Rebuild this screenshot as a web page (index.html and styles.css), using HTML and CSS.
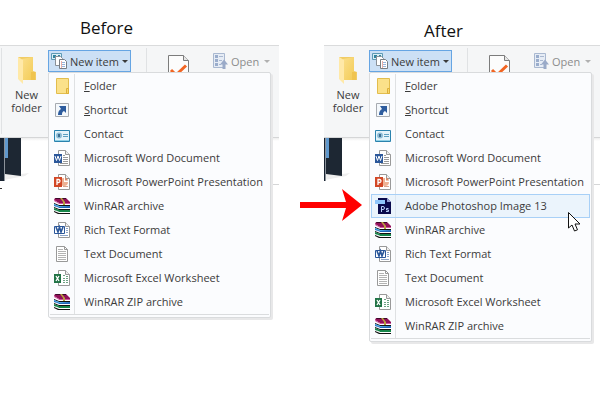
FILE: index.html
```
<!DOCTYPE html>
<html lang="en">
<head>
<meta charset="UTF-8">
<meta name="viewport" content="width=device-width, initial-scale=1.0">
<title>New item menu</title>
<link rel="stylesheet" href="styles.css">
</head>
<body>

<!-- Icons shared by both menus -->
<svg class="sprite" aria-hidden="true">
    <defs>
        <linearGradient id="gold" x1="0" y1="0" x2="1" y2="1">
            <stop offset="0" stop-color="#fbdf8b"/>
            <stop offset="1" stop-color="#f3cc58"/>
        </linearGradient>
    </defs>
    <symbol id="big-folder" viewBox="0 0 18 27">
        <path d="M0 0H15V14L18 15V23H5Z" fill="#f1cc65"/>
        <path d="M4 2L15 0V23H5Z" fill="url(#gold)"/>
        <path d="M0 0L5 3V27L0 22Z" fill="#ffe9a8"/>
        <path d="M13 15h4v8h-4z" fill="#f0c44f"/>
    </symbol>
    <symbol id="new-item" viewBox="0 0 16 16">
        <path d="M.5 .5h10v6h-10z" fill="#d9eef5" stroke="#5d9ab5"/>
        <path d="M2 2h3v3H2zM7 2h2v2H7z" fill="#32849f"/>
        <path d="M4.500 3.500h5l2 2v7h-7z" fill="#fff" stroke="#8a9097"/>
        <path d="M8.500 6.500h5l2 2v7h-7z" fill="#fff" stroke="#777d84"/>
        <path d="M10 9.500h4M10 11.500h4M10 13.500h4" stroke="#95b4dc"/>
        <path d="M10.500 8v7" stroke="#eab0a8"/>
    </symbol>
    <symbol id="check-doc" viewBox="0 0 21 27">
        <path d="M.5 .5h15l5 5v21H.5z" fill="#fcfcfc" stroke="#7c7c7c"/>
        <path d="M15.500 .5v5h5" fill="#e6e6e6" stroke="#7c7c7c"/>
        <path d="M3 15l5 5L18 10.500" fill="none" stroke="#f26522" stroke-width="3"/>
    </symbol>
    <symbol id="open" viewBox="0 0 15 16">
        <path d="M.5 .5h11v14H.5z" fill="#e6ecf5" stroke="#a9b8d0"/>
        <path d="M2 2h3v3H2zM2 6h3v3H2zM2 10h3v3H2z" fill="#9aadcc"/>
        <path d="M6 3.500h4M6 7.500h3M6 11.500h2" stroke="#a9b8d0"/>
        <path d="M11 6.500l4 5h-2.500V16h-3v-4.500H7z" fill="#9aaac8"/>
    </symbol>
    <symbol id="folder" viewBox="0 0 16 16">
        <path d="M2.500 .5h12v15h-12z" fill="#fbe18a" stroke="#e2bd4e"/>
        <path d="M12.500 10.500h2v5h-2z" fill="#f9d86c" stroke="#dcb03a"/>
    </symbol>
    <symbol id="shortcut" viewBox="0 0 16 16">
        <path d="M1.500 1.500h13v13h-13z" fill="#f4f8fc" stroke="#a7abb1"/>
        <path d="M5 4h7v7l-2-2c-2 1-2 2-2 4H4c0-3 1-5 3-6z" fill="#2d5c9e"/>
    </symbol>
    <symbol id="contact" viewBox="0 0 16 16">
        <path d="M.5 4.500h15v11H.5z" fill="#e4f3fa" stroke="#2a82ad"/>
        <path d="M1 14.500h14" stroke="#8fd0e6"/>
        <circle cx="5" cy="9.500" r="3" fill="#8dbcd5"/>
        <path d="M4 8h2v3H4z" fill="#3e6f91"/>
        <path d="M9 8.500h5M9 10.500h5" stroke="#5b9fc0"/>
    </symbol>
    <symbol id="page" viewBox="0 0 16 16">
        <path d="M4.500 .5h7l4 4v11h-11z" fill="#fff" stroke="#999"/>
        <path d="M11.500 .5v4h4" fill="#eee" stroke="#999"/>
    </symbol>
    <symbol id="word" viewBox="0 0 16 16">
        <use href="#page"/>
        <path d="M9 5.500h2M9 7.500h5M9 9.500h5M9 11.500h5M6 13.500h8" stroke="#999"/>
        <path d="M0 4h8v9H0z" fill="#2b579a"/>
        <path d="M1 6l1.500 4.500L4 6l1.500 4.500L7 6" fill="none" stroke="#fff"/>
    </symbol>
    <symbol id="powerpoint" viewBox="0 0 16 16">
        <use href="#page"/>
        <path d="M10 4a4 4 0 1 0 4 4h-4z" fill="#eeb194"/>
        <path d="M11 3.500a4 4 0 0 1 3 3h-3z" fill="#d98b6a"/>
        <path d="M9 12.500h5" stroke="#d9a48e"/>
        <path d="M0 3h8v10H0z" fill="#d24726"/>
        <path d="M3 11V5.500h1.500a1.500 1.500 0 0 1 0 3H3" fill="none" stroke="#fff" stroke-width="1.300"/>
    </symbol>
    <symbol id="photoshop" viewBox="0 0 16 16">
        <path d="M3 0h9l4 4v12H3z" fill="#0a0a4c"/>
        <path d="M12 0l4 4h-4z" fill="#8f9bd0"/>
        <path d="M0 2h10v4H0z" fill="#8ec5fa"/>
        <path d="M6.500 14V8.500h1.500a1.500 1.500 0 0 1 0 3H6.500M13.500 10.500h-2v1.500h2v1.500h-2.500" fill="none" stroke="#b5cdf5"/>
    </symbol>
    <symbol id="winrar" viewBox="0 0 16 16">
        <path d="M1 0h11l4 4v1H5L0 2z" fill="#901058"/>
        <path d="M1 0h11v1H2z" fill="#3a0828"/>
        <path d="M0 2l5 3h11v1H5L0 3z" fill="#d0559c"/>
        <path d="M1 4l4 2h10v1H5z" fill="#fff"/>
        <path d="M0 5l5 2h11v1H5L0 6z" fill="#111"/>
        <path d="M0 6l5 2h11v2H5L0 8z" fill="#2167b8"/>
        <path d="M0 6l5 2h11L5 9 0 7z" fill="#56b4ec"/>
        <path d="M1 8l4 2h10v1H5z" fill="#fff"/>
        <path d="M0 9l5 2h11v1H5l-5-2z" fill="#111"/>
        <path d="M0 10l5 2h11v2H5l-5-2z" fill="#17864a"/>
        <path d="M1 12l4 2h10v1H5z" fill="#fff"/>
        <path d="M0 13l5 2h11v1H4l-4-2z" fill="#111"/>
        <path d="M6 0h2l3 4v3H9V4z" fill="#b8a040"/>
    </symbol>
    <symbol id="rtf" viewBox="0 0 16 16">
        <use href="#page"/>
        <path d="M12 6.500h2M12 8.500h2M12 10.500h2M6 13.500h8" stroke="#8ba3c7"/>
        <path d="M.5 4.500h10v7H.5z" fill="#fff" stroke="#2b579a"/>
        <path d="M2 5l2 5 1.500-5L7 10l2-5" fill="none" stroke="#2b579a" stroke-width="1.600"/>
    </symbol>
    <symbol id="text" viewBox="0 0 16 16">
        <path d="M2.500 .5h8l3 3v12h-11z" fill="#fff" stroke="#999"/>
        <path d="M10.500 .5v3h3" fill="none" stroke="#999"/>
        <path d="M4 3.500h5M4 5.500h8M4 7.500h8M4 9.500h8M4 11.500h8M4 13.500h8" stroke="#b3b3b3"/>
    </symbol>
    <symbol id="excel" viewBox="0 0 16 16">
        <use href="#page"/>
        <path d="M9 5.500h2M12 6.500h2M9 8.500h2M12 8.500h2M9 10.500h2M12 10.500h2M9 12.500h2M12 12.500h2" stroke="#6fa384"/>
        <path d="M0 4h7v9H0z" fill="#217346"/>
        <path d="M2 6l3 5M5 6l-3 5" stroke="#fff" stroke-width="1.300"/>
    </symbol>
    <symbol id="binders" viewBox="0 0 30 52">
        <path d="M5 36h16l8-1-4 3-16 3-5 1z" fill="#eee"/>
        <path d="M5 0h16v38L5 36z" fill="#1d2733"/>
        <path d="M0 0h4v43H0z" fill="#172230"/>
        <path d="M4 0h1v43H4z" fill="#8b929a"/>
        <path d="M5 0h3v20H5z" fill="#5f98cd"/>
        <path d="M0 50h2v1H0z" fill="#333"/>
    </symbol>
</svg>

<main class="compare">
    <section class="shot">
        <h2>Before</h2>
        <div class="ribbon">
            <span class="divider"></span>
            <button class="new-folder">
                <svg width="18" height="27"><use href="#big-folder"/></svg>
                New folder
            </button>
            <div class="dropdown">
                <button class="new-item" aria-expanded="true">
                    <svg width="16" height="16"><use href="#new-item"/></svg>
                    New item
                    <span class="caret"></span>
                </button>
                <div class="menu">
                    <ul>
                        <li><button><svg><use href="#folder"/></svg><span><u>F</u>older</span></button></li>
                        <li><button><svg><use href="#shortcut"/></svg><span><u>S</u>hortcut</span></button></li>
                        <li><button><svg><use href="#contact"/></svg><span>Contact</span></button></li>
                        <li><button><svg><use href="#word"/></svg><span>Microsoft Word Document</span></button></li>
                        <li><button><svg><use href="#powerpoint"/></svg><span>Microsoft PowerPoint Presentation</span></button></li>
                        <li><button><svg><use href="#winrar"/></svg><span>WinRAR archive</span></button></li>
                        <li><button><svg><use href="#rtf"/></svg><span>Rich Text Format</span></button></li>
                        <li><button><svg><use href="#text"/></svg><span>Text Document</span></button></li>
                        <li><button><svg><use href="#excel"/></svg><span>Microsoft Excel Worksheet</span></button></li>
                        <li><button><svg><use href="#winrar"/></svg><span>WinRAR ZIP archive</span></button></li>
                    </ul>
                </div>
            </div>
            <span class="divider group-end"></span>
            <svg class="properties" width="21" height="27"><use href="#check-doc"/></svg>
            <button class="open" disabled>
                <svg width="15" height="16"><use href="#open"/></svg>
                Open
                <span class="caret"></span>
            </button>
        </div>
        <div class="files">
            <svg width="30" height="52"><use href="#binders"/></svg>
            <div class="preview"></div>
        </div>
    </section>

    <section class="shot after">
        <h2>After</h2>
        <div class="ribbon">
            <button class="new-folder">
                <svg width="18" height="27"><use href="#big-folder"/></svg>
                New folder
            </button>
            <div class="dropdown">
                <button class="new-item" aria-expanded="true">
                    <svg width="16" height="16"><use href="#new-item"/></svg>
                    New item
                    <span class="caret"></span>
                </button>
                <div class="menu">
                    <ul>
                        <li><button><svg><use href="#folder"/></svg><span><u>F</u>older</span></button></li>
                        <li><button><svg><use href="#shortcut"/></svg><span><u>S</u>hortcut</span></button></li>
                        <li><button><svg><use href="#contact"/></svg><span>Contact</span></button></li>
                        <li><button><svg><use href="#word"/></svg><span>Microsoft Word Document</span></button></li>
                        <li><button><svg><use href="#powerpoint"/></svg><span>Microsoft PowerPoint Presentation</span></button></li>
                        <li class="active">
                            <button><svg><use href="#photoshop"/></svg><span>Adobe Photoshop Image 13</span></button>
                            <svg class="arrow" viewBox="0 0 62 32"><path d="M0 13h46L42 0l20 16-20 16 4-13H0z" fill="#f00"/></svg>
                            <svg class="cursor" viewBox="0 0 13 20"><path d="M.5 .5v15.500l3.500-3 2.500 6 3-1.200-2.500-5.800h5z" fill="#fff" stroke="#111"/></svg>
                        </li>
                        <li><button><svg><use href="#winrar"/></svg><span>WinRAR archive</span></button></li>
                        <li><button><svg><use href="#rtf"/></svg><span>Rich Text Format</span></button></li>
                        <li><button><svg><use href="#text"/></svg><span>Text Document</span></button></li>
                        <li><button><svg><use href="#excel"/></svg><span>Microsoft Excel Worksheet</span></button></li>
                        <li><button><svg><use href="#winrar"/></svg><span>WinRAR ZIP archive</span></button></li>
                    </ul>
                </div>
            </div>
            <span class="divider group-end"></span>
            <svg class="properties" width="21" height="27"><use href="#check-doc"/></svg>
            <button class="open" disabled>
                <svg width="15" height="16"><use href="#open"/></svg>
                Open
                <span class="caret"></span>
            </button>
        </div>
        <div class="files">
            <svg width="27" height="49" viewBox="3 0 27 49"><use href="#binders" width="30" height="52"/></svg>
            <div class="preview"></div>
        </div>
    </section>
</main>

</body>
</html>
```
FILE: styles.css
```
* {
    box-sizing: border-box;
}

body {
    min-height: 100vh;
    margin: 0;
    background-color: #fff;
    color: #3b3b3b;
    font-family: "Open Sans", "Noto Sans", sans-serif;
    font-size: 11px;
}

svg {
    display: block;
    flex: none;
}

.sprite {
    position: absolute;
    width: 0;
    height: 0;
}

button {
    margin: 0;
    padding: 0;
    border: none;
    background: none;
    color: inherit;
    font: inherit;
}

.compare {
    display: grid;
    grid-template-columns: 279fr 276fr;
    column-gap: 45px;
    align-items: start;
    min-height: 100vh;
}

.shot h2 {
    margin: 0;
    padding: 16px 0 5px 80px;
    color: #111;
    font-size: 17px;
    font-weight: normal;
    line-height: 24px;
}

.after h2 {
    padding: 19px 0 2px 100px;
}

.ribbon {
    display: flex;
    align-items: flex-start;
    height: 93px;
    padding-left: 1px;
    background-color: #f5f6f7;
    border-top: 1px solid #dadbdc;
    border-bottom: 1px solid #d5d6d7;
}

.after .ribbon {
    padding-left: 0;
}

.divider {
    flex: none;
    width: 1px;
    height: 86px;
    margin-top: 2px;
    background-color: #e0e2e4;
}

.new-folder {
    flex: none;
    width: 46px;
    padding: 11px 0 0 3px;
    line-height: 13px;
}

.new-folder svg {
    margin: 0 auto 4px;
}

.after .new-folder {
    width: 45px;
}

.dropdown {
    position: relative;
    flex: none;
    margin-top: 4px;
}

.new-item {
    display: flex;
    align-items: center;
    gap: 3px;
    width: 83px;
    height: 22px;
    padding-left: 2px;
    background-color: #cce0f5;
    border: 1px solid #66a5e3;
}

.caret {
    border: 3px solid transparent;
    border-top-color: currentColor;
    border-bottom: none;
}

.group-end {
    margin-left: 15px;
}

.properties {
    margin: 9px 24px 0 21px;
}

.open {
    display: flex;
    align-items: center;
    gap: 3px;
    margin-top: 7px;
    color: #8c8c8c;
}

.open .caret {
    margin-left: 2px;
    color: #b0b0b0;
}

.menu {
    position: absolute;
    z-index: 1;
    top: 100%;
    left: 0;
    width: 223px;
    padding: 1px;
    background-color: #fbfcfe;
    border: 1px solid #d9dbdd;
    border-radius: 2px;
    box-shadow: 2px 2px 0 #e8e8e9;
}

.menu ul {
    margin: 0 0 1px;
    padding: 0;
    list-style: none;
    border-bottom: 1px solid #dadcde;
    background: linear-gradient(#dfe1e3, #dfe1e3) 24px 0 / 1px 100% no-repeat;
}

.menu li {
    position: relative;
}

.menu li button {
    display: flex;
    align-items: center;
    gap: 14px;
    width: 100%;
    height: 24px;
    padding-left: 3px;
    border: 1px solid transparent;
    text-align: left;
    white-space: nowrap;
}

.menu button svg {
    width: 16px;
    height: 16px;
}

.menu button span {
    padding-bottom: 2px;
}

.menu .active button {
    background-color: rgba(216, 234, 250, 0.45);
    border-color: #a8d0f7;
}

/* Red pointer and mouse sit over the highlighted row */
.arrow {
    position: absolute;
    top: -5px;
    right: calc(100% + 9px);
    width: 62px;
    height: 32px;
}

.cursor {
    position: absolute;
    z-index: 1;
    top: 18px;
    right: 9px;
    width: 13px;
    height: 20px;
}

.files {
    display: flex;
    justify-content: space-between;
    align-items: flex-start;
    background: linear-gradient(#eee, #fff) 0 0 / 100% 3px no-repeat;
}

.preview {
    width: 8px;
    height: 47px;
    border-bottom: 1px solid #d5d6d7;
}
```
